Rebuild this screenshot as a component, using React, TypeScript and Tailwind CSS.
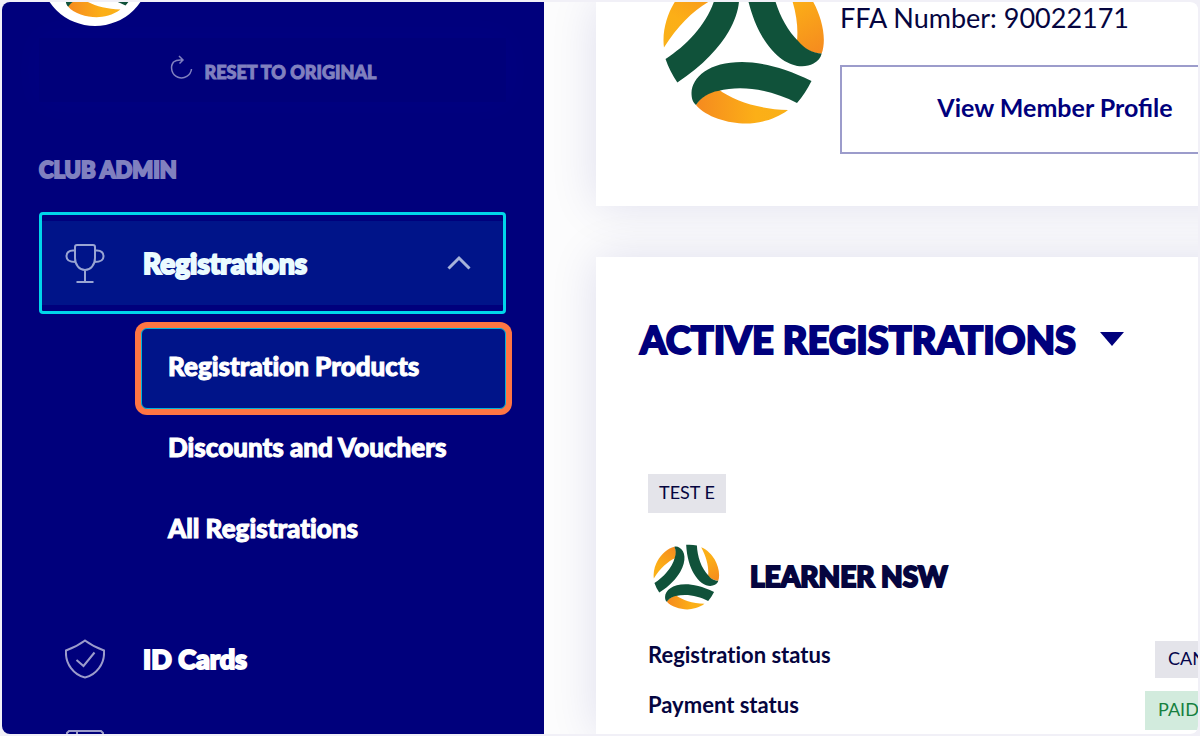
import { useState } from "react";

const subItems = [
    { id: "products", name: "Registration Products" },
    { id: "discounts", name: "Discounts and Vouchers" },
    { id: "all", name: "All Registrations" },
]

const statuses = [
    { label: "Registration status", value: "CAN", style: "h-[37px] w-[43px] bg-[#e4e4ea] text-[#05054a]" },
    { label: "Payment status", value: "PAID", style: "h-[39px] w-[53px] bg-[#d2ebdd] text-[#15803f]" },
]

function Ball({ id, className }: any) {
    return (
        <svg viewBox="-82 -82 164 164" className={className} aria-hidden="true">
            <defs>
                <linearGradient id={id} x1="0" x2="1" y1="0" y2="0">
                    <stop offset="0" stopColor="#f58a1f" />
                    <stop offset="0.65" stopColor="#fcaf17" />
                    <stop offset="1" stopColor="#f9b018" />
                </linearGradient>
            </defs>
            {[0, 120, 240].map((angle) => (
                <g key={angle} transform={`rotate(${angle})`}>
                    <path fill={`url(#${id})`} d="M-48 62C-44 54-34 49-26 46C-10 58 14 66 44 67C31 77 14 80.500 2 80.500C-16 80.500-38 74-48 62Z" />
                    <path fill="#10523a" d="M67.500 38C40 24 15 19-2 19C-35 19-52 34-52.500 50C-52.500 55-51.500 59-48 62C-44 55-34 49-26 48C0 41 30 48 53 60Q61 51 67.500 38Z" />
                </g>
            ))}
        </svg>
    )
}

function Sidebar() {
    const [open, setOpen] = useState(true);
    const [selected, setSelected] = useState("products");

    return (
        <aside className="w-[542px] shrink-0 overflow-hidden bg-[#00007c] pr-[38px] pl-[37px] text-white">
            <div className="relative z-10 -mt-[86px] ml-[1px] flex size-[110px] items-center justify-center rounded-full bg-white">
                <Ball id="club" className="size-[93px]" />
            </div>
            <button className="mt-3 flex h-16 w-full items-center justify-center gap-3 bg-[#00007a] pt-1 text-[18px] font-black text-[#8080bf] shadow-[0_0_32px_#000084] [-webkit-text-stroke:1px]">
                <svg viewBox="0 0 24 26" className="mb-2 h-[26px] w-6" fill="none" stroke="currentColor" strokeWidth="1.500" aria-hidden="true">
                    <path d="M4.500 7A10 10 0 1 0 22.500 14M4.500 7Q7.500 4.500 13 5M10 1L14 5L10.500 8.500" />
                </svg>
                RESET TO ORIGINAL
            </button>
            <h2 className="mt-[54px] text-[22px] leading-[28px] font-black text-[#8080bf] [-webkit-text-stroke:2px]">CLUB ADMIN</h2>

            <button
                onClick={() => setOpen(!open)}
                aria-expanded={open}
                className="mt-[28px] flex h-[102px] w-full rounded-sm border-[3px] border-[#00d5ea] py-[6px]">
                <span className="flex h-full w-full items-center bg-[#001489] pr-8 pl-[23px]">
                    <svg viewBox="0 0 40 40" className="size-10" fill="none" stroke="#99a5d3" strokeWidth="2" aria-hidden="true">
                        <path d="M12 2H28Q30 2 30 4V15C30 22 25.500 27 20 27S10 22 10 15V4Q10 2 12 2ZM10 7.500H8C3.500 7.500 1.500 10 1.500 13.500S5 19 10.500 19M30 7.500H32C36.500 7.500 38.500 10 38.500 13.500S35 19 29.500 19M20 27V39M11.500 39H28.500" />
                    </svg>
                    <span className="ml-[38px] text-[28px] font-black text-[#eafbff] [-webkit-text-stroke:2px] [font-variant-ligatures:none]">Registrations</span>
                    <svg viewBox="0 0 24 16" className="ml-auto h-4 w-6" fill="none" stroke="#a6b2da" strokeWidth="3" aria-hidden="true">
                        <path d="M1.500 13.500L12 3L22.500 13.500" />
                    </svg>
                </span>
            </button>

            {open && (
                <ul className="mt-[14px] ml-[102px]">
                    {subItems.map((item) => (
                        <li key={item.id}>
                            <a
                                href="#"
                                onClick={() => setSelected(item.id)}
                                className={selected == item.id
                                    ? "flex h-[81px] items-center rounded-md border border-[#00b4d8] bg-[#001489] pb-1 pl-[26px] text-[26px] font-black ring-[6px] ring-[#ff7543] [-webkit-text-stroke:1px] [font-variant-ligatures:none]"
                                    : "flex h-[81px] items-center border border-transparent pb-1 pl-[26px] text-[26px] font-black [-webkit-text-stroke:1px] [font-variant-ligatures:none]"}>
                                {item.name}
                            </a>
                        </li>
                    ))}
                </ul>
            )}

            <a href="#" className="mt-[47px] flex h-[82px] items-center pl-[26px] text-[27px] font-black [-webkit-text-stroke:2px]">
                <svg viewBox="0 0 40 40" className="size-10" fill="none" stroke="#9c9ccb" strokeWidth="2" aria-hidden="true">
                    <path d="M20 1.500C26 6 32 9 39 11.500C40 25 31 36 20 38.500C9 36 0 25 1 11.500C8 9 14 6 20 1.500ZM11.500 21L18.500 27L29.500 13.500" />
                </svg>
                <span className="ml-[38px]">ID Cards</span>
            </a>
            <a href="#" aria-label="Calendar" className="mt-[30px] block pl-[26px]">
                <svg viewBox="0 0 40 40" className="size-10" fill="none" stroke="#9c9ccb" strokeWidth="2" aria-hidden="true">
                    <path d="M4 1H36L38 3V38H2V3ZM12 1V38M2 5H38" />
                </svg>
            </a>
        </aside>
    )
}

export default function App() {
    return (
        <div className="h-screen bg-[#f1f0f7] p-[2px] font-['Lato',sans-serif]">
            <div className="flex h-full overflow-hidden rounded-lg bg-[#fcfcfd]">
                <Sidebar />
                <main className="flex min-w-0 flex-1 flex-col gap-[51px] overflow-hidden pl-[52px] text-[#05053f]">
                    <section className="-mr-12 flex h-[204px] shrink-0 bg-white pl-[66px] shadow-[0_0_44px_rgba(20,20,120,0.12)]">
                        <Ball id="member" className="-mt-[41px] size-[164px] shrink-0" />
                        <div className="ml-[14px] min-w-0 flex-1">
                            <p className="text-[27px] leading-[32px] whitespace-nowrap">FFA Number: 90022171</p>
                            <button className="mt-[31px] h-[89px] w-[430px] border-2 border-[#9c9ccb] pb-1 text-[25px] font-bold text-[#00007c]">
                                View Member Profile
                            </button>
                        </div>
                    </section>

                    <section className="-mr-12 flex-1 bg-white pt-[57px] pr-12 pl-[44px] shadow-[0_0_44px_rgba(20,20,120,0.12)]">
                        <h1>
                            <button className="flex items-center gap-6 text-[38px] leading-[50px] font-black whitespace-nowrap text-[#00007c] [-webkit-text-stroke:2px]">
                                ACTIVE REGISTRATIONS
                                <svg viewBox="0 0 24 14" className="h-[14px] w-6" fill="currentColor" aria-hidden="true">
                                    <path d="M0 0H24L12 14Z" />
                                </svg>
                            </button>
                        </h1>
                        <div className="mt-[110px] pl-2">
                            <span className="flex h-[39px] w-[78px] items-center justify-center bg-[#e4e4ea] pb-[2px] text-[18px]">TEST E</span>
                            <div className="mt-[30px] flex items-center gap-[30px]">
                                <Ball id="team" className="ml-[5px] size-[67px]" />
                                <h2 className="pb-[2px] text-[28px] leading-[36px] font-black [-webkit-text-stroke:2px]">LEARNER NSW</h2>
                            </div>
                            <dl className="mt-[31px] flex flex-col gap-[13px]">
                                {statuses.map((s) => (
                                    <div key={s.label} className="flex items-start justify-between">
                                        <dt className="text-[22px] leading-[28px] font-bold [font-variant-ligatures:none]">{s.label}</dt>
                                        <dd className={`flex items-center overflow-hidden pb-[2px] pl-[13px] text-[18px] ${s.style}`}>{s.value}</dd>
                                    </div>
                                ))}
                            </dl>
                        </div>
                    </section>
                </main>
            </div>
        </div>
    )
}
